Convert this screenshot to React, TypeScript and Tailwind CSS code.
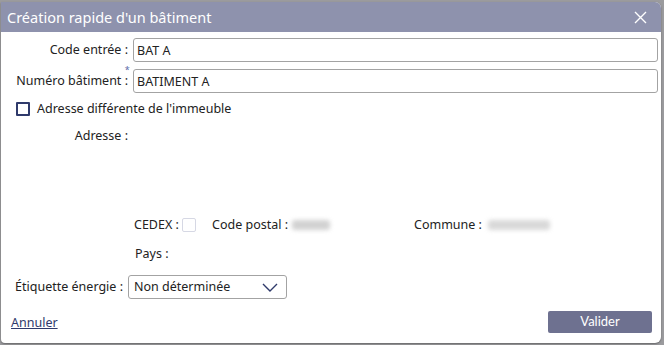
import { useState } from 'react';

export default function App() {
  const [codeEntree, setCodeEntree] = useState('BAT A');
  const [numero, setNumero] = useState('BATIMENT A');
  const [adresseDiff, setAdresseDiff] = useState(false);

  return (
    <div className="w-[664px] h-[345px] bg-[#9b9b9e] pt-[2px] pl-[1px] overflow-hidden font-['Noto_Sans','Open_Sans',sans-serif] text-[12.5px] text-[#222]">
      <div className="w-[660px] h-[341px] bg-white rounded-tr-[6px] rounded-br-[6px] rounded-bl-[4px] overflow-hidden flex flex-col shadow-[0_1px_2px_rgba(0,0,0,0.35)]">
        {/* Header */}
        <div className="h-[30px] shrink-0 bg-[#8e92ad] flex items-center justify-between pl-[6px] pr-[14px]">
          <span className="text-white text-[14.5px] leading-none">Création rapide d'un bâtiment</span>
          <svg width="13" height="13" viewBox="0 0 13 13" className="text-white">
            <path d="M1 1 L12 12 M12 1 L1 12" stroke="currentColor" strokeWidth="1.4" />
          </svg>
        </div>

        {/* Body */}
        <div className="flex-1 flex flex-col pt-[6px] pr-[3px]">
          {/* Code entrée */}
          <div className="flex items-center h-[24px]">
            <label className="w-[127px] text-right">Code entrée :</label>
            <input
              value={codeEntree}
              onChange={(e) => setCodeEntree(e.target.value)}
              className="ml-[5px] flex-1 h-[24px] border border-[#a3a3a3] rounded-[3px] px-[3px] outline-none text-[12.5px]"
            />
          </div>

          {/* Numéro bâtiment */}
          <div className="flex items-center h-[24px] mt-[7px]">
            <label className="w-[127px] text-right">
              Numéro bâtiment <span className="relative">:<span className="absolute -top-[7px] left-0 leading-none text-[9px] text-[#5a6aa8]">*</span></span>
            </label>
            <input
              value={numero}
              onChange={(e) => setNumero(e.target.value)}
              className="ml-[5px] flex-1 h-[24px] border border-[#a3a3a3] rounded-[3px] px-[3px] outline-none text-[12.5px]"
            />
          </div>

          {/* Adresse différente */}
          <div className="flex items-center h-[18px] mt-[7px] pl-[15px]">
            <button
              onClick={() => setAdresseDiff(!adresseDiff)}
              className="w-[14px] h-[14px] border-2 border-[#2f3a6b] rounded-[1px] bg-white"
            />
            <span className="ml-[7px]">Adresse différente de l'immeuble</span>
          </div>

          {/* Adresse */}
          <div className="flex items-center h-[18px] mt-[9px]">
            <span className="w-[127px] text-right">Adresse :</span>
          </div>

          {/* CEDEX / Code postal / Commune */}
          <div className="flex items-center h-[18px] mt-[71px] pl-[133px]">
            <span className="w-[48px]">CEDEX :</span>
            <span className="w-[14px] h-[14px] border border-[#d6d8e4] rounded-[2px]" />
            <span className="ml-[16px] w-[80px]">Code postal :</span>
            <span className="w-[122px] flex items-center">
              <span className="w-[38px] h-[10px] bg-[#d2d2d2] blur-[2px] rounded-[3px]" />
            </span>
            <span className="w-[74px]">Commune :</span>
            <span className="flex items-center">
              <span className="w-[62px] h-[10px] bg-[#d9d9d9] blur-[2px] rounded-[3px]" />
            </span>
          </div>

          {/* Pays */}
          <div className="flex items-center h-[18px] mt-[11px] pl-[134px]">
            <span>Pays :</span>
          </div>

          {/* Étiquette énergie */}
          <div className="flex items-center h-[24px] mt-[12px]">
            <span className="w-[122px] text-right">Étiquette énergie :</span>
            <div className="ml-[5px] w-[159px] h-[24px] border border-[#a3a3a3] rounded-[3px] flex items-center justify-between pl-[5px] pr-[8px]">
              <span>Non déterminée</span>
              <svg width="16" height="9" viewBox="0 0 16 9">
                <path d="M1 1 L8 8 L15 1" stroke="#2f3a6b" strokeWidth="1.4" fill="none" />
              </svg>
            </div>
          </div>

          {/* Footer */}
          <div className="flex items-center justify-between mt-[12px] pl-[10px] pr-[6px]">
            <a href="#" className="underline text-[#2f3a6b] mt-[3px]">Annuler</a>
            <button className="w-[104px] h-[22px] bg-[#6e7190] text-white rounded-[2px] font-['Lato',sans-serif] text-[13px]">
              Valider
            </button>
          </div>
        </div>
      </div>
    </div>
  );
}
